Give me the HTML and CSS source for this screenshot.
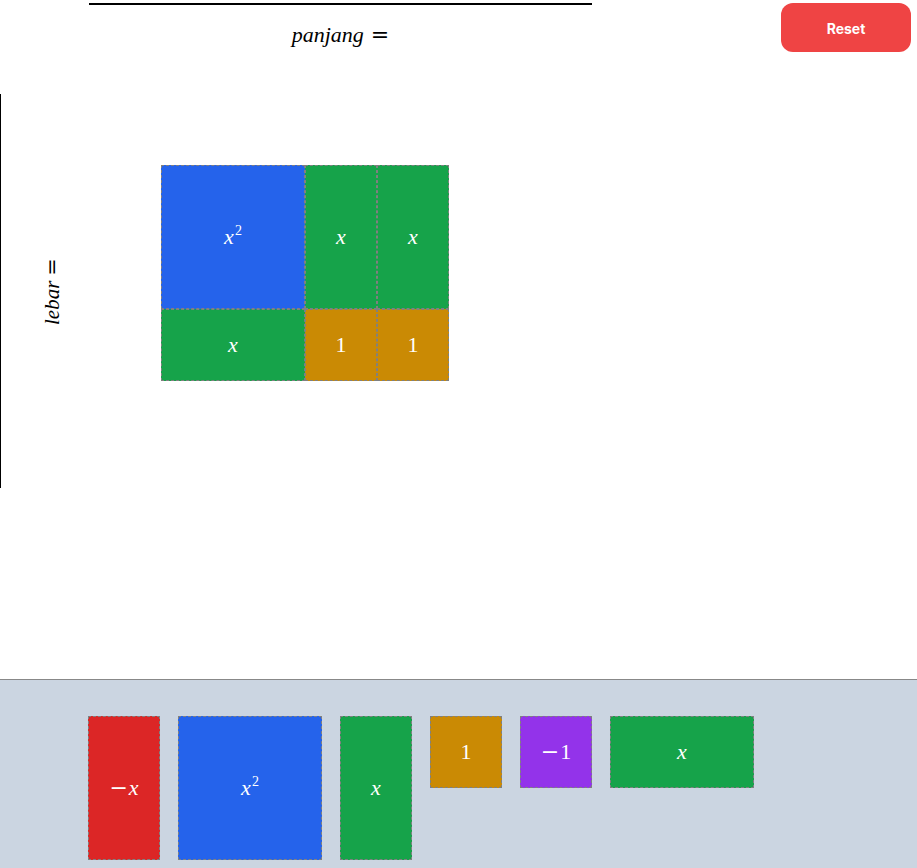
FILE: index.html
```html
<!DOCTYPE html>
<html>
<head>
<meta charset="utf-8">
<link rel="stylesheet" href="styles.css">
</head>
<body>
<div class="top">
  <div class="length">
    <div class="math label"><i>panjang</i><span class="rel">=</span></div>
  </div>
  <button class="reset">Reset</button>
</div>
<div class="work">
  <div class="side">
    <div class="math label rot small"><i>lebar</i><span class="rel">=</span></div>
  </div>
  <div class="board">
    <div class="row">
      <div class="tile big blue"><span class="math"><i>x</i><sup>2</sup></span></div>
      <div class="tile tall green"><span class="math"><i>x</i></span></div>
      <div class="tile tall green"><span class="math"><i>x</i></span></div>
    </div>
    <div class="row">
      <div class="tile wide green"><span class="math"><i>x</i></span></div>
      <div class="tile unit amber"><span class="math">1</span></div>
      <div class="tile unit amber"><span class="math">1</span></div>
    </div>
  </div>
</div>
<div class="tray">
  <div class="tile tall red"><span class="math"><span class="minus">−</span><i>x</i></span></div>
  <div class="tile big blue"><span class="math"><i>x</i><sup>2</sup></span></div>
  <div class="tile tall green"><span class="math"><i>x</i></span></div>
  <div class="tile unit amber"><span class="math">1</span></div>
  <div class="tile unit purple"><span class="math"><span class="minus">−</span>1</span></div>
  <div class="tile wide green"><span class="math"><i>x</i></span></div>
</div>
</body>
</html>
```
FILE: styles.css
```css
html, body {
  margin: 0;
  padding: 0;
  background: #fff;
}
body {
  width: 917px;
  height: 868px;
  overflow: hidden;
  position: relative;
  font-family: "Liberation Serif", serif;
}
.math {
  font-family: "Liberation Serif", serif;
  font-size: 22px;
  line-height: 1;
  white-space: nowrap;
}
.math i {
  font-style: italic;
}
.math sup {
  font-size: 14px;
  vertical-align: 9px;
  line-height: 0;
  margin-left: 1px;
}
.minus {
  font-family: "DejaVu Serif", serif;
  margin-right: 1px;
}
.label {
  font-size: 22px;
}
.label.small {
  font-size: 21px;
}
.rel {
  margin-left: 7px;
  font-family: "DejaVu Serif", serif;
}
.small .rel {
  margin-left: 5px;
}
.top {
  display: flex;
  align-items: flex-start;
  height: 94px;
  padding-top: 3px;
  box-sizing: border-box;
}
.length {
  margin-left: 89px;
  width: 503px;
  border-top: 2px solid #000;
  display: flex;
  justify-content: center;
  padding-top: 19px;
}
.reset {
  margin-left: auto;
  margin-right: 6px;
  width: 130px;
  height: 49px;
  border: none;
  border-radius: 12px;
  background: #ef4444;
  color: #fff;
  font-family: Inter, "Noto Sans", sans-serif;
  font-weight: 700;
  font-size: 14px;
  padding: 0;
  line-height: 51px;
}
.work {
  height: 394px;
  border-left: 1px solid #000;
  display: flex;
  align-items: flex-start;
}
.side {
  width: 102px;
  height: 100%;
  display: flex;
  align-items: center;
  justify-content: center;
}
.rot {
  transform: rotate(-90deg);
}
.board {
  margin-top: 71px;
  margin-left: 58px;
  display: flex;
  flex-direction: column;
}
.row {
  display: flex;
}
.tile {
  box-sizing: border-box;
  border: 1px dashed #808080;
  display: flex;
  align-items: center;
  justify-content: center;
  color: #fff;
  flex: none;
}
.big { width: 144px; height: 144px; }
.tall { width: 72px; height: 144px; }
.wide { width: 144px; height: 72px; }
.unit { width: 72px; height: 72px; }
.blue { background: #2563eb; }
.green { background: #16a34a; }
.amber { background: #ca8a04; }
.red { background: #dc2626; }
.purple { background: #9333ea; }
.tray {
  position: absolute;
  left: 0;
  right: 0;
  top: 679px;
  bottom: 0;
  background: #cbd5e1;
  border-top: 1px solid #888;
  display: flex;
  align-items: flex-start;
  gap: 18px;
  padding: 36px 0 0 88px;
}
```
